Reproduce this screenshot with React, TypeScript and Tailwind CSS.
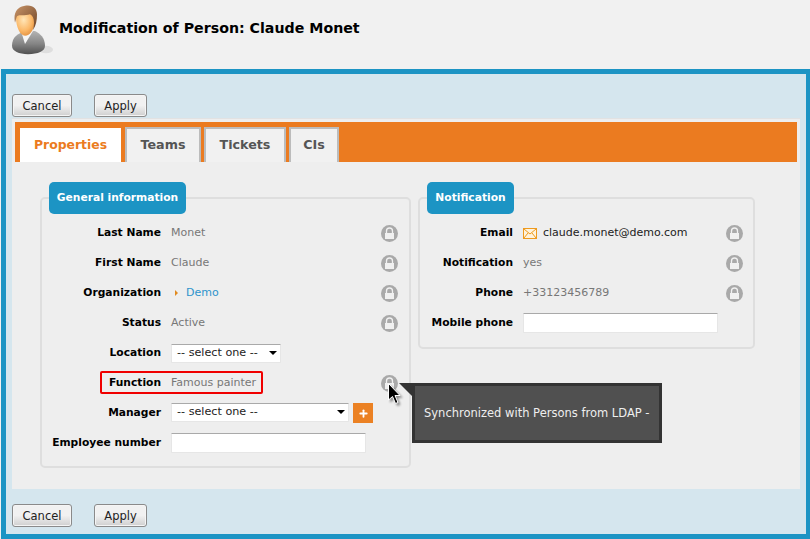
import { Plus } from 'lucide-react';
import type { ReactNode } from 'react';

const font = "font-['DejaVu_Sans',sans-serif]";

function PersonIcon() {
  return (
    <svg width="44" height="52" viewBox="0 0 44 56" preserveAspectRatio="none" className="shrink-0">
      <defs>
        <linearGradient id="suit" x1="0" y1="0" x2="0" y2="1">
          <stop offset="0" stopColor="#b4b4b4" />
          <stop offset="0.55" stopColor="#858585" />
          <stop offset="1" stopColor="#505050" />
        </linearGradient>
        <radialGradient id="face" cx="0.4" cy="0.4" r="0.75">
          <stop offset="0" stopColor="#ffe6b8" />
          <stop offset="0.55" stopColor="#fbb868" />
          <stop offset="1" stopColor="#d9802e" />
        </radialGradient>
        <linearGradient id="hair" x1="0" y1="0" x2="1" y2="1">
          <stop offset="0" stopColor="#c89468" />
          <stop offset="1" stopColor="#6e4426" />
        </linearGradient>
      </defs>
      <ellipse cx="35" cy="48" rx="7" ry="4" fill="#dedede" />
      <path d="M1 44 C1 34 7 31 14 28 L24 28 C29 31 34 35 34 44 C34 50 27 53 17 53 C8 53 1 50 1 44 Z" fill="url(#suit)" />
      <path d="M10 28 L22 28 L14 42 Z" fill="#f6f6f6" />
      <path d="M5 13 C5 6 10 4 16 5 C23 6 25 11 24 18 C23 27 19 33 14 33 C9 33 5 24 5 13 Z" fill="url(#face)" />
      <path d="M4 19 C2 9 6 2 13 1 C21 -1 26 3 26 10 C26 17 25 22 22 27 C24 18 23 12 19 10 C14 12 8 10 6 12 C5 14 5 16 4 19 Z" fill="url(#hair)" />
    </svg>
  );
}

function LockIcon() {
  return (
    <svg width="17" height="17" viewBox="0 0 17 17" className="shrink-0">
      <circle cx="8.5" cy="8.5" r="8.5" fill="#a9a9a9" />
      <path d="M5.5 8 V6 a3 3 0 0 1 6 0 V8" fill="none" stroke="#f0f0f0" strokeWidth="1.3" />
      <rect x="4" y="8" width="9" height="6" fill="#f0f0f0" />
    </svg>
  );
}

function Btn({ label, className }: { label: string; className?: string }) {
  return (
    <button
      className={`h-[23px] pt-[2px] border border-[#8a8a8a] rounded-[3px] bg-gradient-to-b from-[#f1f1f1] from-50% to-[#cfcfcf] text-[11.5px] text-[#222] shadow-[inset_0_0_0_1px_#f5f5f5] ${className}`}
    >
      {label}
    </button>
  );
}

function Row({ label, labelWidth, lock, children }: { label: string; labelWidth: string; lock?: boolean; children?: ReactNode }) {
  return (
    <div className="flex items-center h-[30px]">
      <div className={`${labelWidth} shrink-0 text-right font-bold text-[10.7px] text-black whitespace-nowrap`}>{label}</div>
      <div className="flex-1 pl-[10px] text-[11px] text-[#777] flex items-center min-w-0 whitespace-nowrap">{children}</div>
      {lock && <LockIcon />}
    </div>
  );
}

function Fieldset({ title, className, legendWidth, children }: { title: string; className: string; legendWidth: string; children: ReactNode }) {
  return (
    <div className={`relative border-2 border-[#dedede] rounded-[5px] ${className}`}>
      <div className={`absolute left-[7px] top-[-17px] h-[32px] ${legendWidth} rounded-[5px] bg-[#1c94c4] text-white font-bold text-[10.7px] flex items-center justify-center`}>
        {title}
      </div>
      {children}
    </div>
  );
}

function FakeSelect({ width, className }: { width: string; className?: string }) {
  return (
    <div className={`${width} h-[19px] bg-white border border-[#e6e6e6] border-t-[#a9a9a9] rounded-[1px] flex items-center justify-between pl-[5px] pr-[3px] text-[11.2px] text-[#222] ${className ?? ''}`}>
      <span>-- select one --</span>
      <span className="w-0 h-0 border-x-[4px] border-x-transparent border-t-[4px] border-t-black" />
    </div>
  );
}

function TextInput() {
  return <input className="w-[195px] h-[20px] bg-white border border-[#e6e6e6] border-t-[#a9a9a9] rounded-[1px] outline-none" />;
}

function Tab({ label, width }: { label: string; width: string }) {
  return (
    <div className={`${width} h-[35px] pb-[2px] bg-[#f1f1f1] border-x-2 border-t-2 border-[#bcbcbc] flex items-center justify-center text-[12.7px] font-bold text-[#555]`}>
      {label}
    </div>
  );
}

export default function App() {
  return (
    <div className={`${font} w-[810px] h-[539px] overflow-hidden bg-[#f1f1f1] relative`}>
      <div className="h-[69px] flex items-start pl-[11px] pt-[5px]">
        <PersonIcon />
        <h1 className="ml-[4px] mt-[13px] text-[14.2px] font-bold text-black leading-5">Modification of Person: Claude Monet</h1>
      </div>

      <div className="ml-[1px] h-[470px] border-[5px] border-r-[4px] border-[#1c94c4] bg-[#d5e6ee] pt-[20px] pl-[6px] pr-[6px]">
        <div className="flex gap-[22px]">
          <Btn label="Cancel" className="w-[60px]" />
          <Btn label="Apply" className="w-[53px]" />
        </div>

        <div className="mt-[1px] h-[371px] bg-[#eee] border-t border-[#e2e2e2] pt-[3px] px-[3px]">
          <div className="h-[40px] bg-[#eb7b20] flex items-end pl-[5px] gap-[3px]">
            <div className="mr-[1px] w-[101px] h-[34px] bg-white flex items-center justify-center text-[12.4px] font-bold text-[#eb7b20]">Properties</div>
            <Tab label="Teams" width="w-[76px]" />
            <Tab label="Tickets" width="w-[82px]" />
            <Tab label="CIs" width="w-[50px]" />
          </div>

          <div className="flex items-start gap-[7px] pl-[25px] pt-[35px]">
            <Fieldset title="General information" className="w-[371px] h-[271px] pt-[19px] pl-[10px] pr-[11px]" legendWidth="w-[137px]">
              <Row label="Last Name" labelWidth="w-[109px]" lock>Monet</Row>
              <Row label="First Name" labelWidth="w-[109px]" lock>Claude</Row>
              <Row label="Organization" labelWidth="w-[109px]" lock>
                <span className="ml-[4px] mr-[8px] w-0 h-0 border-y-[3px] border-y-transparent border-l-[3px] border-l-[#e08a20]" />
                <span className="text-[#2e94cc]">Demo</span>
              </Row>
              <Row label="Status" labelWidth="w-[109px]" lock>Active</Row>
              <Row label="Location" labelWidth="w-[109px]"><FakeSelect width="w-[110px]" /></Row>
              <Row label="Function" labelWidth="w-[109px]" lock>Famous painter</Row>
              <Row label="Manager" labelWidth="w-[109px]">
                <FakeSelect width="w-[178px]" className="-mt-[2px]" />
                <div className="ml-[4px] w-[20px] h-[20px] bg-[#eb8123] flex items-center justify-center">
                  <Plus size={11} strokeWidth={4} color="#fff" />
                </div>
              </Row>
              <Row label="Employee number" labelWidth="w-[109px]"><TextInput /></Row>
            </Fieldset>

            <Fieldset title="Notification" className="w-[337px] h-[152px] pt-[19px] pl-[10px] pr-[10px]" legendWidth="w-[87px]">
              <Row label="Email" labelWidth="w-[83px]" lock>
                <svg width="14" height="11" viewBox="0 0 14 11" className="mr-[6px] shrink-0">
                  <rect x="0.5" y="0.5" width="13" height="10" fill="#fff3dc" stroke="#ee9a1e" />
                  <path d="M1 1 L7 6 L13 1 M1 10 L5 5 M13 10 L9 5" fill="none" stroke="#ee9a1e" />
                </svg>
                <span className="text-[#222]">claude.monet@demo.com</span>
              </Row>
              <Row label="Notification" labelWidth="w-[83px]" lock>yes</Row>
              <Row label="Phone" labelWidth="w-[83px]" lock>+33123456789</Row>
              <Row label="Mobile phone" labelWidth="w-[83px]"><TextInput /></Row>
            </Fieldset>
          </div>
        </div>

        <div className="flex gap-[22px] mt-[15px]">
          <Btn label="Cancel" className="w-[60px]" />
          <Btn label="Apply" className="w-[53px]" />
        </div>
      </div>

      {/* highlight, tooltip and pointer sit over the form */}
      <div className="absolute left-[100px] top-[371px] w-[163px] h-[23px] border-2 border-[#f00000] rounded-[2px]" />
      <div className="absolute left-[399px] top-[383px] w-0 h-0 border-t-[13px] border-t-[#333] border-l-[13px] border-l-transparent" />
      <div className="absolute left-[412px] top-[383px] w-[250px] h-[60px] border-[3px] border-[#333] bg-[#505050] flex items-center pl-[9px] pt-[1px] text-[11.5px] text-[#eee] whitespace-nowrap">
        Synchronized with Persons from LDAP -
      </div>
      <svg width="16" height="24" viewBox="0 0 16 24" className="absolute left-[388px] top-[383px] drop-shadow-[2px_2px_1px_rgba(0,0,0,0.4)]">
        <path d="M0.5 0.5 V17 L4.5 13.5 L7.5 20.5 L10 19.5 L7 12.5 L12 12.5 Z" fill="#000" stroke="#fff" strokeWidth="1" />
      </svg>
    </div>
  );
}
